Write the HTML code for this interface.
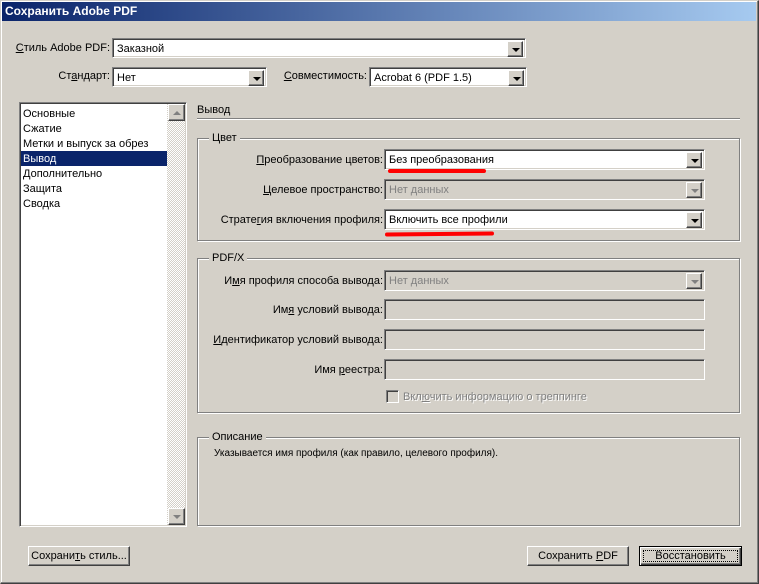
<!DOCTYPE html>
<html><head><meta charset="utf-8"><style>
*{box-sizing:border-box;margin:0;padding:0}
body{width:759px;height:584px;background:#d4d0c8;font-family:"Liberation Sans","DejaVu Sans",sans-serif;font-size:11px;color:#000;position:relative;overflow:hidden}
.a{position:absolute;white-space:nowrap}
.win{position:absolute;left:0;top:0;width:759px;height:584px;border-top:1px solid #d4d0c8;border-left:1px solid #d4d0c8;border-right:1px solid #404040;border-bottom:1px solid #404040;box-shadow:inset -1px -1px 0 #808080,inset 1px 1px 0 #fff}
.title{position:absolute;left:2px;top:2px;width:754px;height:19px;background:linear-gradient(to right,#0a246a,#a6caf0);color:#fff;font-weight:bold;font-size:12px;padding:2px 0 0 3px}
.sunk{position:absolute;background:#fff;border-top:1px solid #808080;border-left:1px solid #808080;border-right:1px solid #fff;border-bottom:1px solid #fff;box-shadow:inset 1px 1px 0 #404040,inset -1px -1px 0 #d4d0c8}
.sunk.dis{background:#d4d0c8}
.sunk span{position:absolute;left:4px;top:4px}
.btn{position:absolute;background:#d4d0c8;border-top:1px solid #fff;border-left:1px solid #fff;border-right:1px solid #404040;border-bottom:1px solid #404040;box-shadow:inset -1px -1px 0 #808080}
.arr{top:2px;right:2px;width:16px;height:16px}
.arr:after{content:"";position:absolute;left:4px;top:6px;border-left:4px solid transparent;border-right:4px solid transparent;border-top:4px solid #000}
.arr.g:after{border-top-color:#808080}
.grp{position:absolute;border:1px solid #808080;box-shadow:1px 1px 0 #fff,inset 1px 1px 0 #fff}
.gl{position:absolute;background:#d4d0c8;padding:0 3px;top:-7px;left:11px}
.lbl{position:absolute;text-align:right;white-space:nowrap}
u{text-decoration:underline}
.pb{position:absolute;text-align:center;line-height:18px}
</style></head><body>
<div class="win"></div>
<div class="title">Сохранить Adobe PDF</div>

<div class="lbl" style="right:649px;top:42px"><u>С</u>тиль Adobe PDF:</div>
<div class="sunk" style="left:112px;top:38px;width:414px;height:20px"><span>Заказной</span><div class="btn arr"></div></div>

<div class="lbl" style="right:649px;top:70px">Ст<u>а</u>ндарт:</div>
<div class="sunk" style="left:112px;top:67px;width:155px;height:20px"><span>Нет</span><div class="btn arr"></div></div>
<div class="lbl" style="right:392px;top:70px"><u>С</u>овместимость:</div>
<div class="sunk" style="left:369px;top:67px;width:158px;height:20px"><span>Acrobat 6 (PDF 1.5)</span><div class="btn arr"></div></div>

<div class="sunk" style="left:19px;top:102px;width:168px;height:425px"></div>
<div class="a" style="left:167px;top:104px;width:18px;height:421px;background:repeating-conic-gradient(#fff 0 25%,#d4d0c8 0 50%) 0 0/2px 2px"></div>
<div class="btn" style="left:168px;top:104px;width:17px;height:17px"><div style="position:absolute;left:4px;top:6px;border-left:4px solid transparent;border-right:4px solid transparent;border-bottom:4px solid #808080"></div></div>
<div class="btn" style="left:168px;top:508px;width:17px;height:17px"><div style="position:absolute;left:4px;top:6px;border-left:4px solid transparent;border-right:4px solid transparent;border-top:4px solid #808080"></div></div>
<div class="a" style="left:21px;top:151px;width:146px;height:15px;background:#0a246a"></div>
<div class="a" style="left:23px;top:107px;line-height:15px;color:#000">Основные<br>Сжатие<br>Метки и выпуск за обрез<br><span style="color:#fff">Вывод</span><br>Дополнительно<br>Защита<br>Сводка</div>

<div class="a" style="left:197px;top:104px">Вывод</div>
<div class="a" style="left:197px;top:118px;width:543px;height:2px;border-top:1px solid #808080;border-bottom:1px solid #fff"></div>

<div class="grp" style="left:197px;top:138px;width:543px;height:103px"><div class="gl">Цвет</div></div>
<div class="lbl" style="right:376px;top:154px"><u>П</u>реобразование цветов:</div>
<div class="sunk" style="left:384px;top:149px;width:321px;height:21px"><span>Без преобразования</span><div class="btn arr"></div></div>
<div class="lbl" style="right:376px;top:184px;color:#000"><u>Ц</u>елевое пространство:</div>
<div class="sunk dis" style="left:384px;top:179px;width:321px;height:21px"><span style="color:#808080">Нет данных</span><div class="btn arr g"></div></div>
<div class="lbl" style="right:376px;top:214px">Страте<u>г</u>ия включения профиля:</div>
<div class="sunk" style="left:384px;top:209px;width:321px;height:21px"><span>Включить все профили</span><div class="btn arr"></div></div>
<div class="a" style="left:388px;top:169px;width:98px;height:4px;background:#f00;border-radius:2px"></div>
<div class="a" style="left:385px;top:232px;width:109px;height:4px;background:#f00;border-radius:2px;transform:rotate(-0.5deg)"></div>

<div class="grp" style="left:197px;top:258px;width:543px;height:155px"><div class="gl">PDF/X</div></div>
<div class="lbl" style="right:376px;top:275px">И<u>м</u>я профиля способа вывода:</div>
<div class="sunk dis" style="left:384px;top:270px;width:321px;height:21px"><span style="color:#808080">Нет данных</span><div class="btn arr g"></div></div>
<div class="lbl" style="right:376px;top:304px">Им<u>я</u> условий вывода:</div>
<div class="sunk dis" style="left:384px;top:299px;width:321px;height:21px"></div>
<div class="lbl" style="right:376px;top:334px"><u>И</u>дентификатор условий вывода:</div>
<div class="sunk dis" style="left:384px;top:329px;width:321px;height:21px"></div>
<div class="lbl" style="right:376px;top:364px">Имя <u>р</u>еестра:</div>
<div class="sunk dis" style="left:384px;top:359px;width:321px;height:21px"></div>
<div class="sunk dis" style="left:386px;top:390px;width:13px;height:13px"></div>
<div class="a" style="left:403px;top:391px;color:#808080;text-shadow:1px 1px 0 #fff">Вкл<u>ю</u>чить информацию о треппинге</div>

<div class="grp" style="left:197px;top:437px;width:543px;height:89px"><div class="gl">Описание</div></div>
<div class="a" style="left:214px;top:448px;font-size:10px">Указывается имя профиля (как правило, целевого профиля).</div>

<div class="btn pb" style="left:28px;top:546px;width:102px;height:20px">Сохрани<u>т</u>ь стиль...</div>
<div class="btn pb" style="left:527px;top:546px;width:102px;height:20px">Сохранить <u>P</u>DF</div>
<div class="btn pb" style="left:639px;top:546px;width:103px;height:20px;border:1px solid #000;box-shadow:inset 1px 1px 0 #fff,inset -1px -1px 0 #404040,inset -2px -2px 0 #808080"><div style="position:absolute;left:3px;top:3px;right:3px;bottom:3px;border:1px dotted #000"></div><span style="position:relative">Восстановить</span></div>
</body></html>
